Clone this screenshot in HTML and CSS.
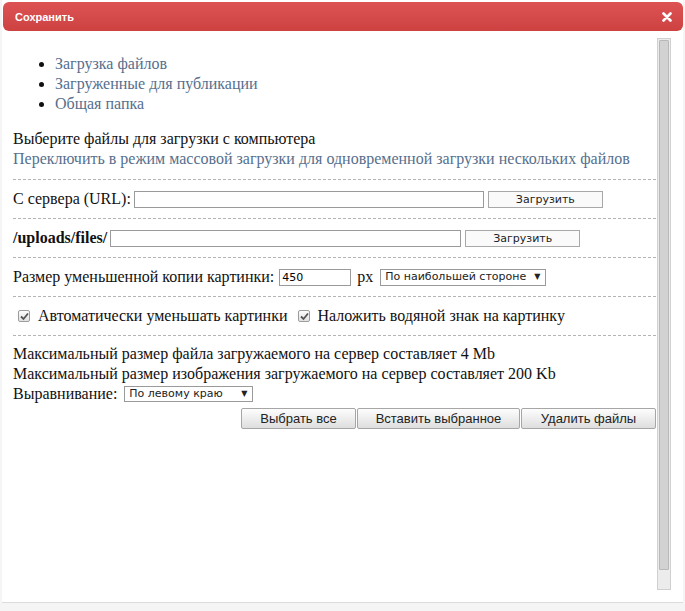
FILE: index.html
```html
<!DOCTYPE html>
<html lang="ru">
<head>
    <meta charset="UTF-8">
    <title>Сохранить</title>
    <link rel="stylesheet" href="styles.css">
</head>
<body>
    <div class="dialog">
        <div class="dialog-head">
            <span class="dialog-title">Сохранить</span>
            <svg class="dialog-close" width="10" height="10" viewBox="0 0 10 10">
                <path d="M1.5 1.5 L8.5 8.5 M8.5 1.5 L1.5 8.5" stroke="#fff" stroke-width="2.6" stroke-linecap="round"/>
            </svg>
        </div>

        <div class="dialog-body">
            <div class="content">
                <ul class="tabs">
                    <li><a href="#">Загрузка файлов</a></li>
                    <li><a href="#">Загруженные для публикации</a></li>
                    <li><a href="#">Общая папка</a></li>
                </ul>

                <div class="intro">
                    <div>Выберите файлы для загрузки с компьютера</div>
                    <a href="#">Переключить в режим массовой загрузки для одновременной загрузки нескольких файлов</a>
                </div>

                <div class="section row">
                    <span>С сервера (URL):</span>
                    <input type="text" class="field field-url">
                    <button class="btn-small">Загрузить</button>
                </div>

                <div class="section row">
                    <b>/uploads/files/</b>
                    <input type="text" class="field field-path">
                    <button class="btn-small">Загрузить</button>
                </div>

                <div class="section row">
                    <span>Размер уменьшенной копии картинки:</span>
                    <input type="text" class="field field-size" value="450">
                    <span class="unit">px</span>
                    <span class="select select-side">По наибольшей стороне <i>▼</i></span>
                </div>

                <div class="section row checks">
                    <span class="check"><svg width="9" height="9" viewBox="0 0 9 9"><path d="M1 4.5 L3.5 7 L8 1.5" fill="none" stroke="#555" stroke-width="1.8"/></svg></span>
                    <span>Автоматически уменьшать картинки</span>
                    <span class="check check-second"><svg width="9" height="9" viewBox="0 0 9 9"><path d="M1 4.5 L3.5 7 L8 1.5" fill="none" stroke="#555" stroke-width="1.8"/></svg></span>
                    <span>Наложить водяной знак на картинку</span>
                </div>

                <div class="section info">
                    <div>Максимальный размер файла загружаемого на сервер составляет 4 Mb</div>
                    <div>Максимальный размер изображения загружаемого на сервер составляет 200 Kb</div>
                    <div class="row">
                        <span>Выравнивание:</span>
                        <span class="select select-align">По левому краю <i>▼</i></span>
                    </div>
                    <div class="actions">
                        <button class="btn btn-all">Выбрать все</button>
                        <button class="btn btn-insert">Вставить выбранное</button>
                        <button class="btn btn-delete">Удалить файлы</button>
                    </div>
                </div>
            </div>

            <div class="scrollbar">
                <div class="thumb"></div>
            </div>
        </div>
    </div>
</body>
</html>
```

FILE: styles.css
```css
body {
    margin: 0;
    background-color: #f5f5f5;
    font-family: "Liberation Serif", "Times New Roman", serif;
    font-size: 16px;
    line-height: 20px;
    color: #111;
}
.dialog {
    margin: 0 2px;
    padding-top: 2px;
    height: 600px;
    background-color: #fff;
    border-bottom: 1px solid #dcdcdc;
}
.dialog-head {
    height: 29px;
    margin: 0 0 0 1px;
    padding: 0 11px 0 12px;
    display: flex;
    align-items: center;
    justify-content: space-between;
    background: linear-gradient(#dd5353, #cd4141);
    border-radius: 6px;
}
.dialog-title {
    color: #fff;
    font-family: "Liberation Sans", Arial, sans-serif;
    font-size: 11px;
    font-weight: bold;
}
.dialog-body {
    display: flex;
    padding-left: 11px;
}
.content {
    width: 643px;
    padding-top: 8px;
}
.scrollbar {
    width: 12px;
    height: 548px;
    margin-top: 7px;
    margin-left: 1px;
    background-color: #ececec;
    border: 1px solid #d0d0d0;
    padding: 1px 0;
}
.thumb {
    height: 528px;
    margin: 0 1px;
    background-color: #d2d2d2;
    border: 1px solid #b8b8b8;
    border-radius: 1px;
}
a {
    color: #566f8d;
    text-decoration: none;
}
.tabs {
    margin: 15px 0;
    padding-left: 42px;
}
.intro {
    padding-bottom: 10px;
}
.section {
    border-top: 1px dashed #b4b4b4;
    padding: 9px 0 9px;
}
.row {
    display: flex;
    align-items: center;
    height: 20px;
}
.field {
    box-sizing: border-box;
    height: 17px;
    margin-left: 4px;
    padding: 0 2px;
    border: 1px solid #9a9a9a;
    font-family: "DejaVu Sans", Tahoma, sans-serif;
    font-size: 11px;
}
.field-url {
    width: 350px;
    margin-left: 3px;
}
.field-path {
    width: 351px;
    margin-left: 3px;
}
.field-size {
    width: 72px;
    margin-left: 5px;
}
.unit {
    margin-left: 6px;
}
.btn-small {
    box-sizing: border-box;
    width: 115px;
    height: 17px;
    margin-left: 4px;
    padding: 0;
    background-color: #fafafa;
    border: 1px solid #a8a8a8;
    font-family: "DejaVu Sans", Tahoma, sans-serif;
    font-size: 11px;
    color: #222;
}
.select {
    box-sizing: border-box;
    display: inline-flex;
    align-items: center;
    justify-content: space-between;
    height: 17px;
    padding: 0 5px 0 4px;
    border: 1px solid #9a9a9a;
    font-family: "DejaVu Sans", Tahoma, sans-serif;
    font-size: 11px;
    color: #222;
}
.select i {
    font-style: normal;
    font-size: 8px;
}
.select-side {
    width: 166px;
    margin-left: 7px;
}
.select-align {
    width: 129px;
    height: 16px;
    margin-left: 7px;
}
.checks {
    padding-left: 5px;
}
.check {
    box-sizing: border-box;
    width: 12px;
    height: 12px;
    margin-right: 8px;
    display: inline-flex;
    align-items: center;
    justify-content: center;
    background: linear-gradient(#fbfbfb, #e2e2e2);
    border: 1px solid #9c9c9c;
    border-radius: 2px;
}
.check-second {
    margin-left: 11px;
    margin-right: 7px;
}
.info {
    padding-top: 8px;
}
.actions {
    display: flex;
    justify-content: flex-end;
    margin-top: 4px;
}
.btn {
    box-sizing: border-box;
    height: 21px;
    margin-left: 1px;
    padding: 0;
    background: linear-gradient(#fdfdfd, #dedede);
    border: 1px solid #a6a6a6;
    border-radius: 2px;
    font-family: "Liberation Sans", Arial, sans-serif;
    font-size: 13px;
    color: #222;
}
.btn-all {
    width: 115px;
}
.btn-insert {
    width: 163px;
}
.btn-delete {
    width: 135px;
}
```
